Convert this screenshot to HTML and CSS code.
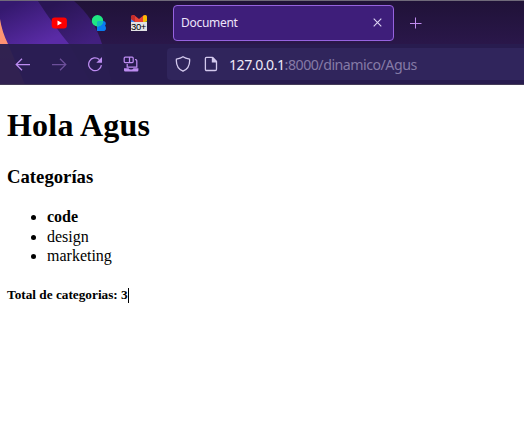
FILE: index.html
```html
<!DOCTYPE html>
<html lang="es">
<head>
<meta charset="utf-8">
<title>Document</title>
<link rel="stylesheet" href="styles.css">
</head>
<body>
<header class="browser">
  <svg class="theme" width="524" height="84" viewBox="0 0 524 84" aria-hidden="true">
    <defs>
      <linearGradient id="band" gradientUnits="userSpaceOnUse" x1="20" y1="0" x2="40" y2="44"><stop offset="0" stop-color="#35196f"/><stop offset="1" stop-color="#5a2ba6"/></linearGradient>
      <linearGradient id="outer" gradientUnits="userSpaceOnUse" x1="60" y1="0" x2="85" y2="44"><stop offset="0" stop-color="#291554"/><stop offset="1" stop-color="#42207f"/></linearGradient>
      <linearGradient id="coral" x1="0" y1="0" x2="0" y2="1"><stop offset="0" stop-color="#ff9b70"/><stop offset="1" stop-color="#ff8178"/></linearGradient>
    </defs>
    <path d="M38 0H74Q94 17 102 43L112 84H90Z" fill="url(#outer)"/>
    <path d="M0 0H38Q54 25 69 43L92 84H0Z" fill="url(#band)"/>
    <path d="M0 18Q2 31 8 43L25 84H0Z" fill="url(#coral)"/>
  </svg>
  <div class="tabs">
    <div class="pins">
      <svg width="16" height="16" viewBox="0 0 16 16"><rect x=".7" y="2.4" width="15.2" height="11.2" rx="3" fill="#f00"/><path d="M6.5 5.5 11 8 6.5 10.5Z" fill="#fff"/></svg>
      <svg width="16" height="16" viewBox="0 0 16 16"><path d="M6 6H12Q14.8 6 14.8 8.5 14.8 10 14 10.8 15 11.6 15 13.2 15 16 12 16H6Z" fill="#087cf0"/><circle cx="6.5" cy="5.7" r="5.7" fill="#1fe783"/><path d="M6 11.4V7Q6 6 8 6H12.2Q11.5 11.4 6 11.4Z" fill="#11b8bd"/></svg>
      <div class="mail">
        <svg width="16" height="16" viewBox="0 0 16 16"><path d="M0 2V14H4V5Z" fill="#4285f4"/><path d="M12 5V14H16V2Z" fill="#34a853"/><path d="M0 2Q0 0 3 0L8 4 13 0Q16 0 16 2V4L8 9.5 0 4Z" fill="#ea4335"/><path d="M0 2V4L4 7V1L2 0Q0 0 0 2Z" fill="#c52e2c"/><path d="M12 1 14 0Q16 0 16 2V6L12 8Z" fill="#fbbc04"/></svg>
        <span class="count">30+</span>
      </div>
    </div>
    <div class="tab"><span>Document</span><svg width="9" height="9" viewBox="0 0 9 9"><path d="m.7.7 7.6 7.6m0-7.6L.7 8.3" stroke="#ddd4f3" stroke-width="1.1"/></svg></div>
    <svg class="plus" width="12" height="12" viewBox="0 0 12 12"><path d="M5.5 .5V11.5M0 6.5H11.5" stroke="#c08cef"/></svg>
  </div>
  <div class="toolbar">
    <div class="actions">
      <svg width="16" height="16" viewBox="0 0 16 16"><path d="M15 8.5H1.3M7 2.7 1.2 8.5 7 14.3"/></svg>
      <svg class="dim" width="16" height="16" viewBox="0 0 16 16"><path d="M1 8.5H14.7M9 2.7 14.8 8.5 9 14.3"/></svg>
      <svg width="16" height="16" viewBox="0 0 16 16"><path d="M12.3 3.5A6.4 6.4 0 1 0 14.4 9.2"/><path class="solid" d="M15 1V6.7H9.3Z"/></svg>
      <svg width="16" height="16" viewBox="0 0 16 16"><rect x="1.2" y="1.2" width="9" height="5.3" rx="1"/><path d="M6.5 1V6.5M12 3.6H12.7Q13.8 3.6 13.8 4.8V11H4.2V8"/><path class="solid" d="M1 12.2H5.6Q6 13.5 8 13.5T10.5 12.2H15.4V14.2Q15.4 15.4 14.2 15.4H2.2Q1 15.4 1 14.2Z"/></svg>
    </div>
    <div class="address">
      <svg width="16" height="16" viewBox="0 0 16 16"><path d="M8 .8Q10.2 2.5 14.6 3.2 15.3 12 8 15.2.7 12 1.4 3.2 5.8 2.5 8 .8Z"/></svg>
      <svg width="16" height="16" viewBox="0 0 16 16"><path d="M3.4 1.4H9.4L13.5 5.5V13.2Q13.5 14.5 12.2 14.5H3.7Q2.4 14.5 2.4 13.2V2.4Q2.4 1.4 3.4 1.4Z"/><path class="solid" d="M8.8 1H10L14 5.2V6.4H8.8Z"/></svg>
      <span class="url"><span class="host">127.0.0.1</span>:8000/dinamico/Agus</span>
    </div>
  </div>
</header>
<main>
  <h1>Hola Agus</h1>
  <h3>Categorías</h3>
  <ul><li><b>code</b></li><li>design</li><li>marketing</li></ul>
  <h5>Total de categorias: 3<span class="caret"></span></h5>
</main>
</body>
</html>
```
FILE: styles.css
```css
* { box-sizing: border-box; }
body { margin: 0; background: #fff; color: #000; font: 16px/20px "Liberation Serif", serif; overflow: hidden; }
svg { display: block; flex: none; fill: none; }
.browser { position: relative; height: 85px; background: linear-gradient(#201238, #2a174a 44px); border-top: 1px solid #706a7a; }
.theme { position: absolute; left: 0; top: 0; }
.tabs { position: relative; height: 43px; display: flex; align-items: center; }
.pins { display: flex; width: 173px; gap: 24px; padding-left: 51px; }
.mail { position: relative; width: 16px; height: 16px; }
.count { position: absolute; left: 0; top: 7px; width: 16px; height: 9px; background: #e2e2e4; color: #000; font: 9.5px/10px "Liberation Sans", sans-serif; letter-spacing: -.4px; white-space: nowrap; }
.tab { width: 221px; height: 36px; border: 1px solid #9663df; border-radius: 4px; background: #3e1e7a; color: #eee5fb; display: flex; align-items: center; justify-content: space-between; padding: 0 11px 0 7px; font: 12px/18px "Noto Sans", sans-serif; letter-spacing: -.3px; }
.plus { margin-left: 16px; }
.toolbar { position: relative; height: 41px; border-bottom: 1px solid #443b57; background: rgba(41, 29, 79, .96); display: flex; align-items: center; }
.actions { display: flex; width: 167px; padding-left: 15px; gap: 20px; }
.actions svg { stroke: #bd8cf1; stroke-width: 1.25; }
.actions .solid { fill: #bd8cf1; stroke: none; }
.actions .dim { opacity: .45; }
.address { flex: 1; height: 32px; border-radius: 4px 0 0 4px; background: #30255c; display: flex; align-items: center; padding-left: 8px; gap: 12px; }
.address svg { stroke: #d3c9ed; stroke-width: 1.3; }
.address .solid { fill: #d3c9ed; stroke: none; }
.url { margin-left: -2px; padding-top: 1px; color: #857aa6; font: 14.2px/20px "Noto Sans", sans-serif; letter-spacing: -.5px; white-space: nowrap; }
.host { color: #eee9f8; }
main { padding: 22px 7px 0; }
h1 { margin: 0; font-size: 32px; line-height: 37px; letter-spacing: .2px; }
h3 { margin: 22px 0 19px; font-size: 18.72px; line-height: 22px; }
ul { margin: 0; padding-left: 40px; line-height: 19.7px; }
h5 { margin: 20px 0 0; font-size: 13.28px; line-height: 18px; display: flex; align-items: center; }
.caret { width: 1px; height: 15px; background: #000; }
```
